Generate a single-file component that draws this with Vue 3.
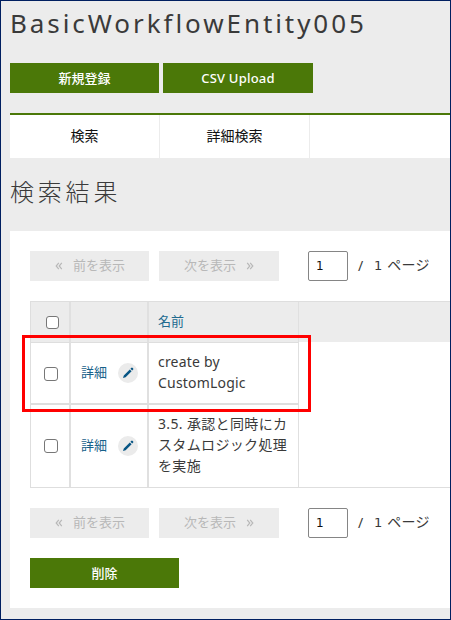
<script setup>
import { ref } from 'vue'

const title = 'BasicWorkflowEntity005'
const page = ref('1')
const pagers = ['top', 'bottom']
const rows = [
  { id: 1, lines: ['create by', 'CustomLogic'], latin: true },
  { id: 2, lines: ['3.5. 承認と同時にカ', 'スタムロジック処理', 'を実施'], latin: false },
]
</script>

<template>
  <main class="screen">
    <h1 class="title">{{ title }}</h1>
    <div class="actions">
      <button class="btn">新規登録</button>
      <button class="btn csv">CSV Upload</button>
    </div>
    <nav class="tabs">
      <a class="tab">検索</a>
      <a class="tab">詳細検索</a>
    </nav>
    <h2 class="heading">検索結果</h2>
    <section class="panel">
      <template v-for="p in pagers" :key="p">
        <div class="pager">
          <button class="step prev" disabled>
            <svg class="chev" viewBox="0 0 8 8"><path d="M3.8 .9 1.2 4l2.6 3.1M6.8 .9 4.2 4l2.6 3.1" /></svg>
            <span>前を表示</span>
          </button>
          <button class="step next" disabled>
            <span>次を表示</span>
            <svg class="chev" viewBox="0 0 8 8"><path d="M1.2 .9 3.8 4 1.2 7.1M4.2 .9 6.8 4 4.2 7.1" /></svg>
          </button>
          <input v-model="page" class="page" type="text" />
          <span class="slash">/</span>
          <span class="total">1</span>
          <span class="unit">ページ</span>
        </div>
        <div v-if="p === 'top'" class="table">
          <div class="row head">
            <div class="cell check"><span class="box small"></span></div>
            <div class="cell"></div>
            <div class="cell name">名前</div>
            <div class="rest"></div>
          </div>
          <div v-for="r in rows" :key="r.id" class="row" :class="'r' + r.id">
            <div class="cell check"><span class="box"></span></div>
            <div class="cell links">
              <a>詳細</a>
              <span class="edit">
                <svg viewBox="0 0 20 20">
                  <path d="M5 15.1l.8-2.7 6-6 1.8 1.8-6 6zM12.4 5.8l1.1-1q.5-.4 .9 0l.8 .8q.4 .5 0 .9l-1 1.1z" />
                </svg>
              </span>
            </div>
            <div class="cell name" :class="{ latin: r.latin }">
              <div v-for="l in r.lines" :key="l" class="line">{{ l }}</div>
            </div>
            <div class="rest"></div>
          </div>
          <div class="highlight"></div>
        </div>
      </template>
      <button class="btn delete">削除</button>
    </section>
  </main>
</template>

<style>
body { margin: 0; overflow: hidden; }
</style>

<style scoped>
* { box-sizing: border-box; }
.screen {
  width: 451px;
  height: 620px;
  padding-left: 9px;
  border: 1px solid #001f60;
  background: #ececec;
  overflow: hidden;
  color: #3a3a3a;
  font-family: "Noto Sans", "Noto Sans CJK JP", sans-serif;
  font-size: 14px;
}
h1, h2 { margin: 0; white-space: nowrap; }
.title {
  height: 62px;
  padding-top: 3px;
  font-size: 26px;
  font-weight: 400;
  line-height: 38px;
  letter-spacing: 2.93px;
}
.actions { display: flex; gap: 4px; height: 50px; }
button { padding: 0; border: 0; font: inherit; }
.btn {
  width: 149px;
  height: 30px;
  background: #4b7808;
  color: #fff;
  font-size: 13px;
  font-weight: 500;
  line-height: 28px;
}
.csv { width: 150px; letter-spacing: .22px; }
.tabs {
  display: flex;
  height: 45px;
  border-top: 2px solid #4b7808;
  background: #fff;
}
.tab {
  width: 150px;
  border-right: 1px solid #ececec;
  color: #111;
  line-height: 42px;
  text-align: center;
}
.heading {
  height: 73px;
  padding-top: 15px;
  font-size: 24px;
  font-weight: 300;
  line-height: 38px;
  letter-spacing: 3.8px;
}
.panel { height: 377px; padding: 20px 0 0 20px; background: #fff; }
.pager { display: flex; height: 30px; line-height: 28px; }
.step {
  display: flex;
  align-items: center;
  width: 119px;
  background: #ececec;
  color: #b8b8b8;
  font-size: 13px;
  line-height: 28px;
}
.step span { position: relative; top: -1px; }
.prev { gap: 10px; padding-left: 25px; }
.next { width: 120px; margin-left: 10px; gap: 10px; padding-left: 25px; }
.chev { width: 8px; height: 8px; fill: none; stroke: #b8b8b8; stroke-width: 1.2; }
.page {
  width: 40px;
  height: 30px;
  margin-left: 29px;
  padding: 0 0 0 7px;
  border: 1px solid #858585;
  border-radius: 2px;
  background: #fff;
  color: #111;
  font: 12px "DejaVu Sans", sans-serif;
}
.slash { box-sizing: content-box; width: 6px; padding-left: 10px; line-height: 29px; }
.total { margin-left: 10px; font: 13px/29px "DejaVu Sans", sans-serif; }
.unit { margin-left: 5px; letter-spacing: .3px; }
.table { position: relative; margin: 20px 0; }
.row { display: grid; grid-template-columns: 41px 78px 150px 1fr; }
.head { height: 41px; border-top: 1px solid #dedede; background: #ececec; }
.head .name { line-height: 39px; font-size: 13px; color: #216a8f; }
.cell { border-right: 2px solid #e0e0e0; }
.cell.name { border-right-width: 1px; padding-left: 9px; }
.check { display: flex; align-items: center; padding-left: 13px; border-left: 1px solid #dedede; }
.head .check { padding: 1px 0 0 15px; }
.box {
  width: 14px;
  height: 14px;
  border: 1.5px solid #777;
  border-radius: 3px;
  background: #fff;
}
.small { width: 13px; height: 13px; }
.r1 { height: 63px; }
.r1 .cell { border-top: 1px solid #dedede; border-bottom: 2px solid #dedede; }
.r2 { height: 83px; border-bottom: 1px solid #dedede; }
.r2 .check, .r2 .links { padding-bottom: 1px; }
.r1 .box { margin-top: 1px; }
.links { display: flex; align-items: center; padding-left: 10px; color: #17618a; font-size: 13px; }
.links a { width: 37px; line-height: 20px; margin-top: -2px; }
.edit { width: 20px; height: 20px; border-radius: 50%; background: #ebebeb; }
.edit svg { display: block; width: 20px; height: 20px; fill: #075584; }
.line { line-height: 21px; white-space: nowrap; }
.r1 .name { padding-top: 8px; }
.r2 .name { padding-top: 8px; letter-spacing: .35px; }
.latin { letter-spacing: .2px; }
.highlight {
  position: absolute;
  top: 34px;
  left: -8px;
  width: 289px;
  height: 77px;
  border: 3px solid #f00;
}
.delete { display: block; margin-top: 20px; }
</style>
